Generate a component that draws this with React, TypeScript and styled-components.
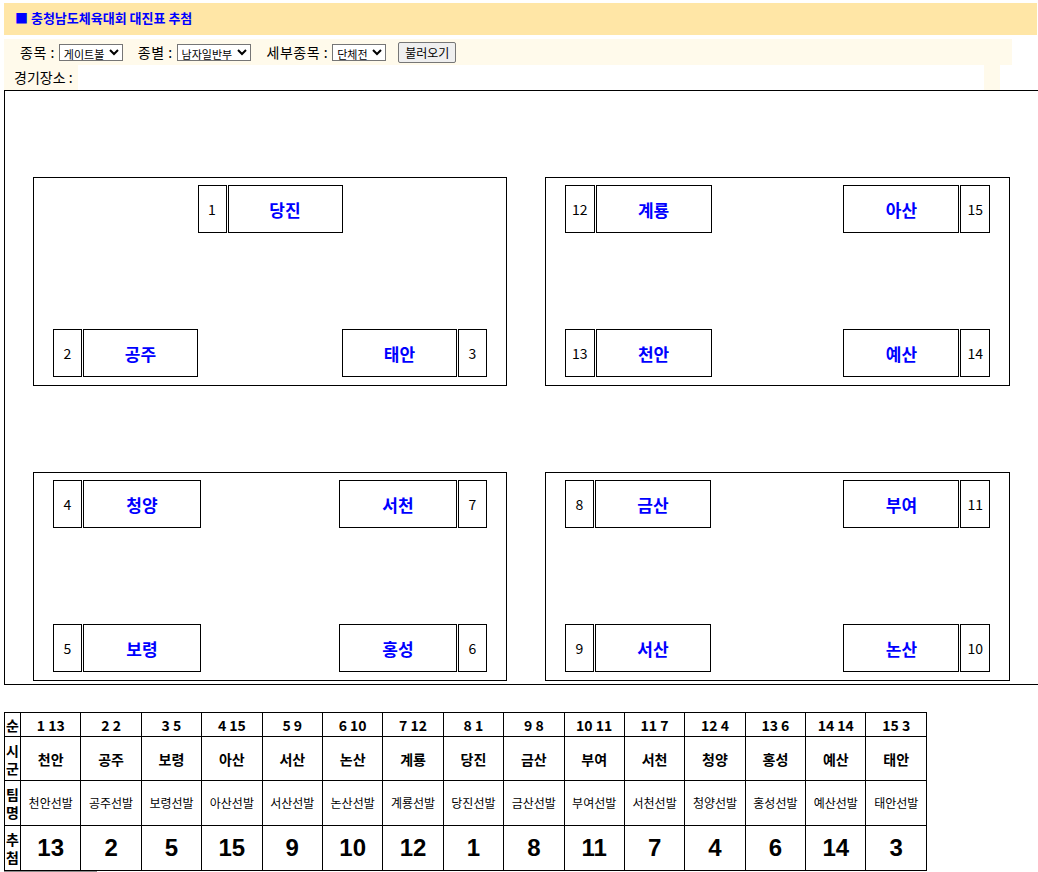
import styled, { createGlobalStyle } from "styled-components";

type Entry = { no: number; name: string; side: "left" | "right" };
type Row = { align: "center" | "space-between"; entries: Entry[] };
type Group = { nameWidth: number; rows: Row[] };

const groups: Group[] = [
  {
    nameWidth: 115,
    rows: [
      { align: "center", entries: [{ no: 1, name: "당진", side: "left" }] },
      {
        align: "space-between",
        entries: [
          { no: 2, name: "공주", side: "left" },
          { no: 3, name: "태안", side: "right" },
        ],
      },
    ],
  },
  {
    nameWidth: 116,
    rows: [
      {
        align: "space-between",
        entries: [
          { no: 12, name: "계룡", side: "left" },
          { no: 15, name: "아산", side: "right" },
        ],
      },
      {
        align: "space-between",
        entries: [
          { no: 13, name: "천안", side: "left" },
          { no: 14, name: "예산", side: "right" },
        ],
      },
    ],
  },
  {
    nameWidth: 118,
    rows: [
      {
        align: "space-between",
        entries: [
          { no: 4, name: "청양", side: "left" },
          { no: 7, name: "서천", side: "right" },
        ],
      },
      {
        align: "space-between",
        entries: [
          { no: 5, name: "보령", side: "left" },
          { no: 6, name: "홍성", side: "right" },
        ],
      },
    ],
  },
  {
    nameWidth: 116,
    rows: [
      {
        align: "space-between",
        entries: [
          { no: 8, name: "금산", side: "left" },
          { no: 11, name: "부여", side: "right" },
        ],
      },
      {
        align: "space-between",
        entries: [
          { no: 9, name: "서산", side: "left" },
          { no: 10, name: "논산", side: "right" },
        ],
      },
    ],
  },
];

const draws = [
  { order: 1, city: "천안", pick: 13 },
  { order: 2, city: "공주", pick: 2 },
  { order: 3, city: "보령", pick: 5 },
  { order: 4, city: "아산", pick: 15 },
  { order: 5, city: "서산", pick: 9 },
  { order: 6, city: "논산", pick: 10 },
  { order: 7, city: "계룡", pick: 12 },
  { order: 8, city: "당진", pick: 1 },
  { order: 9, city: "금산", pick: 8 },
  { order: 10, city: "부여", pick: 11 },
  { order: 11, city: "서천", pick: 7 },
  { order: 12, city: "청양", pick: 4 },
  { order: 13, city: "홍성", pick: 6 },
  { order: 14, city: "예산", pick: 14 },
  { order: 15, city: "태안", pick: 3 },
];

const GlobalStyle = createGlobalStyle`
  html, body {
    margin: 0;
    padding: 0;
    background: #fff;
    overflow: hidden;
  }
  body {
    font-family: "Noto Sans CJK KR", "Noto Sans", sans-serif;
    color: #000;
  }
`;

const App = () => {
  return (
    <>
      <GlobalStyle />
      <Page>
        <TitleBar>■ 충청남도체육대회 대진표 추첨</TitleBar>
        <ControlBar>
          <Label>종목 :</Label>
          <Select defaultValue="게이트볼">
            <option>게이트볼</option>
          </Select>
          <Label $gap={15}>종별 :</Label>
          <Select defaultValue="남자일반부">
            <option>남자일반부</option>
          </Select>
          <Label $gap={16}>세부종목 :</Label>
          <Select defaultValue="단체전">
            <option>단체전</option>
          </Select>
          <LoadButton>불러오기</LoadButton>
        </ControlBar>
        <VenueRow>
          <VenueLabel>경기장소 :</VenueLabel>
          <VenueStrip />
        </VenueRow>
        <Frame>
          <BracketGrid>
            {groups.map((g, gi) => (
              <GroupBox key={gi}>
                {g.rows.map((r, ri) => (
                  <EntryRow key={ri} $align={r.align}>
                    {r.entries.map((e) => (
                      <EntryPair key={e.no}>
                        {e.side === "left" && <NumCell>{e.no}</NumCell>}
                        <NameCell $w={g.nameWidth}>{e.name}</NameCell>
                        {e.side === "right" && <NumCell>{e.no}</NumCell>}
                      </EntryPair>
                    ))}
                  </EntryRow>
                ))}
              </GroupBox>
            ))}
          </BracketGrid>
        </Frame>
        <DrawTable>
          <tbody>
            <tr>
              <HeadCell $h={23}>순</HeadCell>
              {draws.map((d) => (
                <OrderCell key={d.order}>
                  {d.order} {d.pick}
                </OrderCell>
              ))}
            </tr>
            <tr>
              <HeadCell $h={43}>시군</HeadCell>
              {draws.map((d) => (
                <CityCell key={d.order}>{d.city}</CityCell>
              ))}
            </tr>
            <tr>
              <HeadCell $h={44}>팀명</HeadCell>
              {draws.map((d) => (
                <TeamCell key={d.order}>{d.city}선발</TeamCell>
              ))}
            </tr>
            <tr>
              <HeadCell $h={44}>추첨</HeadCell>
              {draws.map((d) => (
                <PickCell key={d.order}>{d.pick}</PickCell>
              ))}
            </tr>
          </tbody>
        </DrawTable>
        <ScrollHint />
      </Page>
    </>
  );
};

export default App;

const Page = styled.div`
  padding: 3px 0 0 4px;
`;

const TitleBar = styled.div`
  width: 1033px;
  height: 32px;
  box-sizing: border-box;
  padding: 5px 0 0 11px;
  background: #ffe6a6;
  color: #0000ff;
  font-size: 13px;
  font-weight: bold;
  line-height: 20px;
`;

const ControlBar = styled.div`
  margin-top: 4px;
  width: 1008px;
  height: 26px;
  box-sizing: border-box;
  padding-left: 16px;
  background: #fffaeb;
  display: flex;
  align-items: center;
  font-size: 14px;
`;

const Label = styled.span<{ $gap?: number }>`
  margin-left: ${(p) => p.$gap ?? 0}px;
  margin-right: 4px;
  letter-spacing: 0.5px;
`;

const Select = styled.select`
  height: 17px;
  padding: 0 1px 0 0;
  font-family: "Noto Sans CJK KR", sans-serif;
  font-size: 11px;
  border: 1px solid #767676;
  border-radius: 0;
  background: #fff;
  color: #000;
`;

const LoadButton = styled.button`
  margin-left: 12px;
  height: 21px;
  padding: 0 6px;
  font-family: "Noto Sans CJK KR", sans-serif;
  font-size: 12px;
  background: #efefef;
  border: 1px solid #767676;
  border-radius: 2px;
  color: #000;
`;

const VenueRow = styled.div`
  display: flex;
  height: 25px;
`;

const VenueLabel = styled.div`
  width: 74px;
  box-sizing: border-box;
  padding-left: 10px;
  background: #fffaeb;
  font-size: 14px;
  line-height: 25px;
`;

const VenueStrip = styled.div`
  margin-left: 906px;
  width: 16px;
  background: #fffaeb;
`;

const Frame = styled.div`
  width: 1040px;
  height: 595px;
  box-sizing: border-box;
  border: 1px solid #000;
  padding: 86px 0 0 28px;
`;

const BracketGrid = styled.div`
  display: grid;
  grid-template-columns: 474px 465px;
  grid-auto-rows: 209px;
  column-gap: 38px;
  row-gap: 86px;
`;

const GroupBox = styled.div`
  border: 1px solid #000;
  box-sizing: border-box;
  padding: 7px 19px 8px;
  display: flex;
  flex-direction: column;
  justify-content: space-between;
`;

const EntryRow = styled.div<{ $align: "center" | "space-between" }>`
  display: flex;
  justify-content: ${(p) => p.$align};
`;

const EntryPair = styled.div`
  display: flex;
  gap: 1px;
  height: 48px;
`;

const NumCell = styled.div`
  min-width: 29px;
  box-sizing: border-box;
  padding: 0 6px;
  border: 1px solid #000;
  display: flex;
  align-items: center;
  justify-content: center;
  font-size: 14px;
`;

const NameCell = styled.div<{ $w: number }>`
  width: ${(p) => p.$w}px;
  box-sizing: border-box;
  border: 1px solid #000;
  display: flex;
  align-items: center;
  justify-content: center;
  color: #0000ff;
  font-size: 17px;
  font-weight: bold;
`;

const DrawTable = styled.table`
  margin-top: 27px;
  width: 923px;
  border-collapse: collapse;
  table-layout: fixed;

  td {
    border: 1px solid #000;
    padding: 0;
    text-align: center;
    line-height: 18px;
  }
`;

const HeadCell = styled.td<{ $h: number }>`
  width: 15px;
  height: ${(p) => p.$h}px;
  font-size: 14px;
  font-weight: bold;
  word-break: break-all;
`;

const OrderCell = styled.td`
  font-size: 14px;
  font-weight: bold;
`;

const CityCell = styled.td`
  font-size: 14px;
  font-weight: bold;
`;

const TeamCell = styled.td`
  font-size: 12px;
`;

const PickCell = styled.td`
  font-family: "Liberation Sans", Arial, sans-serif;
  font-size: 24px;
  font-weight: bold;
`;

const ScrollHint = styled.div`
  width: 93px;
  height: 2px;
  background: #8a8a8a;
`;
